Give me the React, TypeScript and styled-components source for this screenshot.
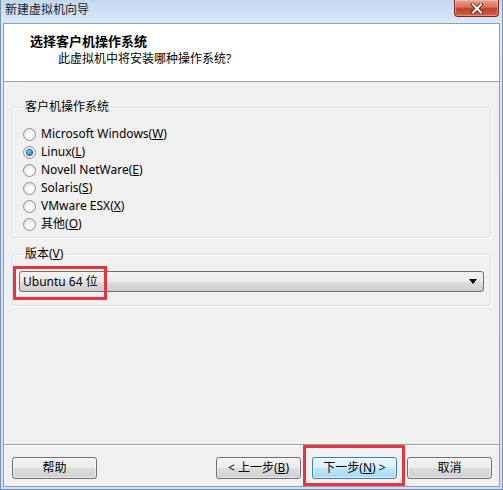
import React from "react";
import styled, { createGlobalStyle } from "styled-components";

const Global = createGlobalStyle`
  html, body { margin: 0; padding: 0; background: #ffffff; }
  body { width: 503px; height: 490px; overflow: hidden; }
  * { box-sizing: border-box; }
`;

const FONT = `"Noto Sans", "Noto Sans CJK SC", sans-serif`;

const Window = styled.div`
  position: relative;
  width: 503px;
  height: 490px;
  display: flex;
  flex-direction: column;
  padding: 0 2px 2px;
  border: 1px solid #7893b6;
  border-top: none;
  background: linear-gradient(to bottom, #c3d8f0 0px, #dae8f7 23px, #cddff2 100%);
  font-family: ${FONT};
  font-size: 12px;
  color: #000;
`;

const TitleBar = styled.div`
  height: 23px;
  display: flex;
  justify-content: space-between;
  align-items: flex-start;
  flex-shrink: 0;
`;

const TitleText = styled.div`
  padding: 2px 0 0 2px;
  line-height: 16px;
  font-size: 12px;
  color: #1a1a1a;
`;

const CloseButton = styled.div`
  width: 45px;
  height: 17px;
  margin-right: 1px;
  display: flex;
  align-items: center;
  justify-content: center;
  border: 1px solid #6e2b22;
  border-top: none;
  border-radius: 0 0 4px 4px;
  background: linear-gradient(to bottom, #e9a594 0%, #d6705a 45%, #c23c24 55%, #d3654a 100%);
  box-shadow: inset 0 0 0 1px rgba(255, 200, 190, 0.45);
`;

const Client = styled.div`
  flex: 1;
  display: flex;
  flex-direction: column;
  border: 1px solid #8aa0bc;
  background: #f0f0f0;
  min-height: 0;
`;

const Header = styled.div`
  height: 58px;
  flex-shrink: 0;
  background: #ffffff;
  border-bottom: 1px solid #a0a0a0;
  padding: 9px 0 0 26px;
  display: flex;
  flex-direction: column;
  gap: 2px;
`;

const HeaderTitle = styled.div`
  font-weight: bold;
  font-size: 13px;
  line-height: 16px;
`;

const HeaderSub = styled.div`
  padding-left: 28px;
  line-height: 16px;
`;

const Main = styled.div`
  flex: 1;
  display: flex;
  flex-direction: column;
  padding: 0 8px;
`;

const Group = styled.fieldset<{ $top: number; $pad: string }>`
  margin: ${(p) => p.$top}px 0 0 0;
  min-inline-size: 0;
  padding: ${(p) => p.$pad};
  border: 1px solid #d5dfe5;
  border-radius: 3px;
  box-shadow: inset 1px 1px 0 #ffffff, 1px 1px 0 #ffffff;
`;

const Legend = styled.legend`
  margin-left: 4px;
  padding: 0 2px;
  line-height: 16px;
`;

const RadioRow = styled.div`
  height: 18px;
  display: flex;
  align-items: center;
  gap: 5px;
  padding-left: 4px;
  line-height: 16px;
`;

const Radio = styled.span<{ $checked?: boolean }>`
  position: relative;
  width: 13px;
  height: 13px;
  border-radius: 50%;
  border: 1px solid #8e8f8f;
  background: radial-gradient(circle at 60% 65%, #ffffff 0%, #f4f4f4 40%, #d8d8d8 100%);
  flex-shrink: 0;
  display: flex;
  align-items: center;
  justify-content: center;
  &::after {
    content: "";
    display: ${(p) => (p.$checked ? "block" : "none")};
    width: 5px;
    height: 5px;
    border-radius: 50%;
    background: radial-gradient(circle at 40% 35%, #9fd7fb 0%, #3b8fd0 50%, #11509a 100%);
    box-shadow: 0 0 0 1px #1c5f9c;
  }
`;

const Key = styled.span`
  text-decoration: underline;
  text-underline-offset: 1px;
`;

const Select = styled.div`
  height: 21px;
  display: flex;
  align-items: center;
  justify-content: space-between;
  padding: 0 6px 0 3px;
  border: 1px solid #707070;
  border-radius: 3px;
  background: linear-gradient(to bottom, #f2f2f2 0%, #ebebeb 50%, #dddddd 51%, #cfcfcf 100%);
  line-height: 16px;
`;

const Footer = styled.div`
  flex-shrink: 0;
  display: flex;
  align-items: center;
  border-top: 1px solid #a0a0a0;
  box-shadow: inset 0 1px 0 #ffffff;
  padding: 12px 7px 7px 8px;
`;

const Spacer = styled.div`
  flex: 1;
`;

const Button = styled.div<{ $default?: boolean; $gap?: number }>`
  width: 85px;
  height: 22px;
  margin-left: ${(p) => p.$gap ?? 0}px;
  display: flex;
  align-items: center;
  justify-content: center;
  border: 1px solid ${(p) => (p.$default ? "#3c7fb1" : "#707070")};
  border-radius: 3px;
  line-height: 16px;
  background: ${(p) =>
    p.$default
      ? "linear-gradient(to bottom, #eaf6fd 0%, #d9f0fc 50%, #bee6fd 51%, #a7d9f5 100%)"
      : "linear-gradient(to bottom, #f2f2f2 0%, #ebebeb 50%, #dddddd 51%, #cfcfcf 100%)"};
  box-shadow: inset 0 0 0 1px ${(p) => (p.$default ? "rgba(255,255,255,0.6)" : "rgba(255,255,255,0.5)")};
`;

const Highlight = styled.div<{ $x: number; $y: number; $w: number; $h: number }>`
  position: absolute;
  left: ${(p) => p.$x}px;
  top: ${(p) => p.$y}px;
  width: ${(p) => p.$w}px;
  height: ${(p) => p.$h}px;
  border: 3px solid #e5353e;
  pointer-events: none;
`;

const options: { pre: string; key: string; checked?: boolean }[] = [
  { pre: "Microsoft Windows", key: "W" },
  { pre: "Linux", key: "L", checked: true },
  { pre: "Novell NetWare", key: "E" },
  { pre: "Solaris", key: "S" },
  { pre: "VMware ESX", key: "X" },
  { pre: "其他", key: "O" },
];

export default function App() {
  return (
    <>
      <Global />
      <Window>
        <TitleBar>
          <TitleText>新建虚拟机向导</TitleText>
          <CloseButton>
            <svg width="14" height="11" viewBox="0 0 14 11">
              <path d="M3 1.5 L11 9.5 M11 1.5 L3 9.5" stroke="#5a1a12" strokeWidth="3.6" strokeLinecap="square" />
              <path d="M3 1.5 L11 9.5 M11 1.5 L3 9.5" stroke="#ffffff" strokeWidth="2" strokeLinecap="square" />
            </svg>
          </CloseButton>
        </TitleBar>
        <Client>
          <Header>
            <HeaderTitle>选择客户机操作系统</HeaderTitle>
            <HeaderSub>此虚拟机中将安装哪种操作系统?</HeaderSub>
          </Header>
          <Main>
            <Group $top={17} $pad="10px 6px 4px 6px">
              <Legend>客户机操作系统</Legend>
              {options.map((o) => (
                <RadioRow key={o.key}>
                  <Radio $checked={o.checked} />
                  <span>
                    {o.pre}(<Key>{o.key}</Key>)
                  </span>
                </RadioRow>
              ))}
            </Group>
            <Group $top={8} $pad="9px 6px 13px 6px">
              <Legend>
                版本(<Key>V</Key>)
              </Legend>
              <Select>
                <span>Ubuntu 64 位</span>
                <svg width="8" height="5" viewBox="0 0 8 5">
                  <path d="M0 0 H8 L4 5 Z" fill="#000" />
                </svg>
              </Select>
            </Group>
          </Main>
          <Footer>
            <Button>帮助</Button>
            <Spacer />
            <Button>
              &lt; 上一步(<Key>B</Key>)
            </Button>
            <Button $default $gap={11}>
              下一步(<Key>N</Key>) &gt;
            </Button>
            <Button $gap={10}>取消</Button>
          </Footer>
        </Client>
        <Highlight $x={12} $y={266} $w={94} $h={34} />
        <Highlight $x={302} $y={445} $w={102} $h={41} />
      </Window>
    </>
  );
}
